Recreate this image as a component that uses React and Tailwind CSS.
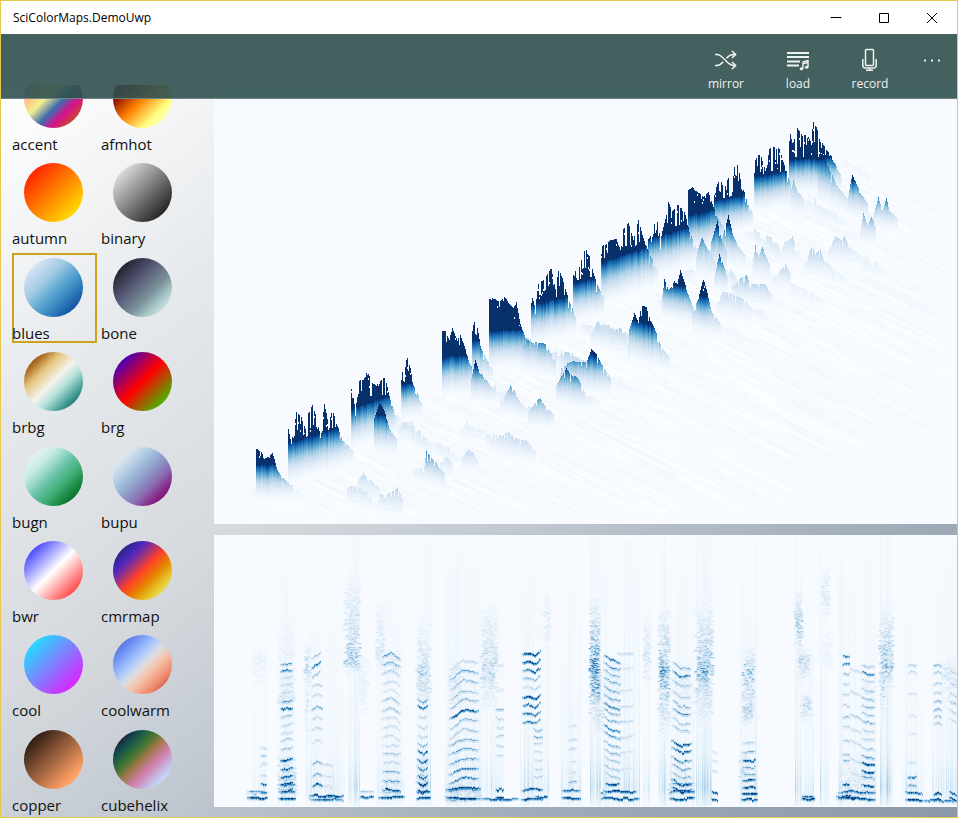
import React from "react";

const BLUES = [
  [247, 251, 255], [222, 235, 247], [198, 219, 239], [158, 202, 225], [107, 174, 214],
  [66, 146, 198], [33, 113, 181], [8, 81, 156], [8, 48, 107],
];
const LEVELS = 28;

function blue(t) {
  const p = Math.max(0, Math.min(0.9999, t)) * 8;
  const i = Math.floor(p);
  const f = p - i;
  const c = BLUES[i].map((v, k) => Math.round(v + (BLUES[i + 1][k] - v) * f));
  return `rgb(${c[0]},${c[1]},${c[2]})`;
}

function random(seed) {
  let s = seed * 7919 + 17;
  return () => {
    s = (s * 1664525 + 1013904223) % 4294967296;
    return s / 4294967296;
  };
}

const newBuckets = () => Array.from({ length: LEVELS + 1 }, () => []);

function put(buckets, t, x, y, w, h) {
  const level = Math.max(0, Math.min(LEVELS, Math.round(t * LEVELS)));
  buckets[level].push(`M${x} ${y}h${w}v${h}h-${w}z`);
}

function Buckets({ buckets, opacity = 1 }) {
  return (
    <g opacity={opacity} shapeRendering="crispEdges">
      {buckets.map((d, i) => (d.length ? <path key={i} d={d.join("")} fill={blue(i / LEVELS)} /> : null))}
    </g>
  );
}

/* Peaks of the surface: x/top pairs, base height at both ends, height where the map saturates, spikiness */
const PEAKS = [
  { p: [[789, 128], [792, 142], [796, 126], [800, 132], [805, 130], [810, 140], [813, 117], [816, 122], [820, 138], [826, 148], [832, 158], [842, 178]], b: [183, 180], dark: 24, s: 0.75 },
  { p: [[818, 168], [822, 154], [826, 162], [830, 170], [836, 184], [852, 204]], b: [192, 208], dark: 36, s: 0.2 },
  { p: [[848, 196], [850, 182], [852, 172], [856, 183], [860, 192], [868, 204]], b: [206, 212], dark: 30, s: 0.3 },
  { p: [[754, 162], [757, 154], [761, 153], [765, 170], [769, 144], [774, 141], [779, 146], [783, 160], [788, 178], [796, 196]], b: [202, 194], dark: 26, s: 0.7 },
  { p: [[790, 192], [793, 178], [797, 190], [804, 200]], b: [205, 208], dark: 40, s: 0.2 },
  { p: [[714, 190], [719, 176], [723, 188], [728, 176], [731, 196], [734, 160], [738, 164], [742, 185], [747, 202], [753, 215]], b: [226, 218], dark: 26, s: 0.85 },
  { p: [[688, 189], [692, 187], [698, 191], [703, 196], [708, 192], [712, 204], [717, 216], [724, 228]], b: [245, 236], dark: 30, s: 0.25 },
  { p: [[722, 236], [726, 222], [728, 214], [732, 232], [738, 246], [746, 256]], b: [254, 260], dark: 32, s: 0.2 },
  { p: [[710, 244], [717, 220], [721, 238], [727, 254]], b: [262, 264], dark: 36, s: 0.2 },
  { p: [[648, 225], [651, 240], [656, 212], [660, 240], [664, 222], [668, 199], [672, 209], [676, 205], [681, 203], [685, 215], [690, 234], [698, 252]], b: [268, 254], dark: 30, s: 0.8 },
  { p: [[696, 254], [702, 235], [706, 246], [716, 264]], b: [268, 272], dark: 40, s: 0.3 },
  { p: [[601, 246], [605, 242], [610, 237], [616, 236], [620, 250], [621, 228], [628, 221], [633, 240], [638, 216], [642, 234], [647, 248], [658, 272]], b: [296, 276], dark: 34, s: 0.6 },
  { p: [[573, 254], [576, 278], [581, 258], [585, 246], [589, 252], [594, 276], [604, 300]], b: [312, 306], dark: 30, s: 0.75 },
  { p: [[531, 294], [535, 307], [538, 279], [545, 276], [551, 264], [555, 287], [558, 265], [562, 277], [566, 292], [576, 318]], b: [334, 324], dark: 30, s: 0.65 },
  { p: [[489, 297], [495, 299], [500, 301], [504, 296], [509, 303], [513, 307], [516, 302], [520, 324], [525, 338], [534, 352]], b: [358, 356], dark: 28, s: 0.2 },
  { p: [[472, 326], [474, 320], [477, 328], [480, 344], [485, 357], [493, 370]], b: [372, 374], dark: 32, s: 0.6 },
  { p: [[442, 330], [445, 329], [449, 338], [452, 328], [457, 340], [460, 333], [464, 346], [469, 362], [477, 376]], b: [386, 384], dark: 30, s: 0.35 },
  { p: [[471, 378], [475, 358], [479, 371], [486, 380], [495, 391]], b: [391, 394], dark: 28, s: 0.2 },
  { p: [[401, 361], [403, 380], [406, 353], [410, 366], [413, 384], [422, 404]], b: [409, 407], dark: 26, s: 0.8 },
  { p: [[351, 384], [355, 410], [359, 380], [363, 378], [368, 370], [372, 382], [376, 386], [381, 376], [385, 378], [389, 396], [397, 420]], b: [440, 424], dark: 32, s: 0.65 },
  { p: [[374, 418], [379, 402], [384, 410], [389, 428], [397, 440]], b: [444, 446], dark: 30, s: 0.2 },
  { p: [[288, 428], [291, 444], [296, 409], [301, 414], [305, 428], [308, 408], [312, 400], [316, 416], [320, 436], [324, 402], [328, 424], [332, 408], [336, 423], [342, 438], [354, 452]], b: [474, 454], dark: 32, s: 0.75 },
  { p: [[256, 448], [260, 450], [264, 458], [268, 456], [272, 452], [276, 466], [281, 476], [293, 486]], b: [490, 489], dark: 26, s: 0.35 },
  { p: [[873, 214], [878, 197], [882, 210], [886, 197], [889, 210], [898, 219]], b: [219, 221], dark: 28, s: 0.2 },
  { p: [[860, 230], [863, 212], [867, 224], [871, 216], [876, 228]], b: [233, 234], dark: 30, s: 0.2 },
  { p: [[828, 248], [833, 240], [835, 234], [840, 238], [845, 236], [850, 248], [862, 257]], b: [256, 258], dark: 48, s: 0.4 },
  { p: [[780, 250], [784, 242], [792, 236], [796, 248], [800, 254]], b: [256, 258], dark: 50, s: 0.4 },
  { p: [[752, 264], [755, 244], [758, 256], [762, 247], [770, 266]], b: [269, 274], dark: 38, s: 0.3 },
  { p: [[804, 266], [812, 245], [815, 254], [820, 249], [824, 261], [832, 266]], b: [268, 270], dark: 40, s: 0.3 },
  { p: [[714, 278], [719, 252], [723, 263], [728, 280]], b: [282, 284], dark: 30, s: 0.2 },
  { p: [[732, 286], [740, 278], [746, 275], [750, 284], [764, 283], [772, 295]], b: [293, 298], dark: 34, s: 0.4 },
  { p: [[774, 278], [785, 263], [791, 275]], b: [281, 283], dark: 42, s: 0.4 },
  { p: [[716, 304], [723, 291], [731, 293], [742, 298], [752, 308]], b: [308, 314], dark: 44, s: 0.5 },
  { p: [[662, 294], [664, 279], [668, 290], [674, 281], [677, 284], [680, 268], [684, 281], [689, 298], [695, 312]], b: [308, 316], dark: 27, s: 0.4 },
  { p: [[692, 312], [698, 298], [703, 276], [707, 293], [711, 310], [721, 325]], b: [322, 328], dark: 30, s: 0.4 },
  { p: [[590, 334], [597, 323], [606, 330], [620, 328], [628, 338]], b: [338, 346], dark: 36, s: 0.5 },
  { p: [[629, 328], [634, 313], [638, 322], [641, 305], [646, 305], [650, 320], [655, 330], [661, 346], [670, 358]], b: [350, 362], dark: 32, s: 0.5 },
  { p: [[520, 348], [526, 338], [532, 341], [545, 343], [556, 362]], b: [360, 370], dark: 32, s: 0.5 },
  { p: [[560, 368], [572, 360], [586, 362], [591, 348], [596, 353], [602, 364], [611, 380]], b: [380, 386], dark: 30, s: 0.35 },
  { p: [[556, 384], [562, 374], [566, 366], [570, 373], [578, 378], [585, 394]], b: [394, 400], dark: 29, s: 0.4 },
  { p: [[500, 402], [505, 394], [510, 384], [516, 395], [524, 406]], b: [405, 410], dark: 34, s: 0.35 },
  { p: [[528, 412], [534, 403], [540, 396], [544, 404], [554, 415]], b: [417, 420], dark: 30, s: 0.4 },
  { p: [[461, 430], [466, 422], [474, 428], [486, 430]], b: [432, 436], dark: 50, s: 0.4 },
  { p: [[490, 440], [500, 437], [508, 430], [514, 438], [526, 440], [536, 452]], b: [443, 456], dark: 38, s: 0.45 },
  { p: [[398, 428], [405, 420], [412, 430]], b: [432, 434], dark: 36, s: 0.4 },
  { p: [[424, 466], [426, 450], [431, 457], [436, 463], [445, 474]], b: [474, 480], dark: 31, s: 0.3 },
  { p: [[440, 463], [446, 456], [453, 464]], b: [466, 468], dark: 36, s: 0.3 },
  { p: [[461, 460], [467, 448], [473, 453], [478, 461]], b: [462, 464], dark: 38, s: 0.3 },
  { p: [[357, 480], [363, 473], [371, 480], [380, 489]], b: [486, 492], dark: 38, s: 0.4 },
  { p: [[347, 488], [354, 485], [366, 491], [372, 499]], b: [495, 501], dark: 38, s: 0.5 },
  { p: [[378, 500], [386, 494], [397, 488], [403, 500]], b: [504, 508], dark: 42, s: 0.4 },
];

function interpolate(points, x) {
  for (let i = 1; i < points.length; i++) {
    if (x <= points[i][0]) {
      const [x0, y0] = points[i - 1];
      const [x1, y1] = points[i];
      return y0 + ((y1 - y0) * (x - x0)) / (x1 - x0);
    }
  }
  return points[points.length - 1][1];
}

const FADE = 12;

function peakBuckets(peak, seed) {
  const rnd = random(seed + 3);
  const out = newBuckets();
  const x0 = peak.p[0][0];
  const x1 = peak.p[peak.p.length - 1][0];
  const tops = peak.p.map((q) => q[1]);
  const tallest = peak.b[0] - Math.min(...tops) > peak.dark * 1.35;
  let run = 0;
  let gap = false;
  let depth = 0;
  let shade = 0;
  for (let x = x0; x < x1; x++) {
    if (run <= 0) {
      gap = !gap && rnd() < peak.s * 1.05;
      run = gap ? 1 + (rnd() < peak.s * 0.5 ? 1 : 0) : 1 + Math.floor(rnd() * 2 + (1 - peak.s) * 2);
      depth = gap ? 0.35 + rnd() * 0.65 : rnd() * 0.22;
      shade = (rnd() - 0.5) * 0.14;
    }
    run -= 1;
    const base = peak.b[0] + ((peak.b[1] - peak.b[0]) * (x - x0)) / (x1 - x0) + rnd() * 2;
    const darkY = base - peak.dark;
    let top = interpolate(peak.p, x);
    if (tallest && top < darkY) top += (darkY - top) * depth * Math.min(1, peak.s * 1.4);
    else top += (base - top) * depth * 0.4;
    top = Math.round(top);
    const notch = rnd() < peak.s * 0.4 ? top + 2 + Math.floor(rnd() * 12) : -1;
    for (let y = top; y < base + FADE; y++) {
      const h = (base + FADE - y) / (peak.dark + FADE);
      if (h > 1.1 && (y === notch || y === notch + 1)) continue;
      const t = h >= 1 ? 1 : Math.pow(h, 2.1) * 0.95 + shade * h * h;
      put(out, t, x, y, 1, 1);
    }
  }
  return out;
}

/* Low ridges: start, end, amplitude, strength */
const BANDS = [
  [735, 224, 800, 270, 9, 0.2], [836, 158, 880, 185, 5, 0.06], [836, 205, 880, 228, 8, 0.16], [795, 200, 850, 225, 9, 0.18],
  [838, 252, 890, 276, 8, 0.14], [765, 275, 800, 292, 8, 0.2], [700, 255, 740, 285, 11, 0.36], [660, 265, 700, 275, 10, 0.3],
  [730, 300, 770, 318, 9, 0.2], [655, 300, 700, 322, 8, 0.3], [575, 325, 640, 345, 10, 0.34], [545, 355, 600, 375, 10, 0.38],
  [510, 343, 550, 362, 10, 0.42], [558, 390, 600, 402, 10, 0.34], [600, 375, 640, 395, 6, 0.08], [505, 405, 550, 418, 6, 0.2],
  [390, 425, 440, 452, 8, 0.2], [430, 445, 465, 462, 6, 0.14], [410, 470, 450, 488, 7, 0.22], [455, 428, 540, 455, 5, 0.2],
  [345, 490, 400, 510, 8, 0.24], [275, 482, 310, 500, 4, 0.08], [480, 388, 520, 405, 7, 0.18], [385, 412, 425, 440, 7, 0.16],
  [605, 345, 650, 362, 10, 0.36], [780, 285, 830, 305, 5, 0.08], [800, 265, 850, 280, 6, 0.14], [248, 490, 280, 493, 3, 0.12],
];

function bandBuckets() {
  const rnd = random(91);
  const out = newBuckets();
  for (const [x0, y0, x1, y1, amp, strength] of BANDS) {
    let k = 0.5;
    for (let x = x0; x < x1; x++) {
      if (rnd() < 0.5) k = rnd();
      const edge = Math.sin((Math.PI * (x - x0)) / (x1 - x0));
      const h = Math.round(amp * (0.4 + k) * edge);
      const base = Math.round(y0 + ((y1 - y0) * (x - x0)) / (x1 - x0));
      for (let j = 0; j < h + 8; j++) {
        put(out, strength * (0.3 + 0.7 * k) * edge * (1 - j / (h + 8)), x, base - h + j, 1, 1);
      }
    }
  }
  return out;
}

function slopeLines(seed, count) {
  const rnd = random(seed);
  const out = [];
  for (let i = 0; i < count; i++) {
    const u = rnd();
    const x = 250 + u * 590;
    const v = Math.pow(rnd(), 1.6) * 230;
    const y = 494 - u * 336 + v * 0.55;
    const len = 20 + rnd() * 60;
    const px = x + v;
    if (px + len > 950 || y + len * 0.5 > 516) continue;
    out.push(`M${px.toFixed(1)} ${y.toFixed(1)}l${len.toFixed(1)} ${(len * 0.5).toFixed(1)}`);
  }
  return out.join("");
}

const SORTED = PEAKS.map((p, i) => ({ i, p, base: Math.max(p.b[0], p.b[1]) })).sort((a, b) => a.base - b.base);
const PEAK_LAYERS = SORTED.map(({ p, i }) => peakBuckets(p, i));
const BAND_LAYER = bandBuckets();
const BLUE_SLOPES = slopeLines(5, 600);
const WHITE_SLOPES = slopeLines(12, 420);

function SurfacePlot() {
  return (
    <svg className="block h-full w-full" viewBox="214 85 743 439" preserveAspectRatio="none" role="img" aria-label="Surface plot">
      <path d={WHITE_SLOPES} stroke="#ffffff" strokeWidth="3" opacity="0.45" fill="none" />
      <path d={BLUE_SLOPES} stroke="#9ecae1" strokeWidth="2" opacity="0.05" fill="none" />
      <Buckets buckets={BAND_LAYER} />
      {PEAK_LAYERS.map((b, i) => <Buckets key={i} buckets={b} />)}
    </svg>
  );
}

/* Harmonic tracks: x range, bend offsets along the track, [y, intensity] list */
const VOICES = [
  { x: [247, 268], bend: [0, 0, 0], ys: [[797, 1], [791, 0.6]] },
  { x: [260, 267], bend: [0, 0, 0], ys: [[747, 0.3], [755, 0.4], [764, 0.3], [775, 0.3], [784, 0.8], [792, 0.9]] },
  { x: [280, 293], bend: [1, 0, -1], ys: [[663, 0.6], [670, 0.7], [677, 0.3], [684, 0.3], [692, 0.3], [701, 0.6], [708, 0.9], [716, 0.4], [724, 0.3], [732, 0.3], [739, 0.4], [748, 0.4], [759, 1], [768, 0.8], [776, 0.9], [783, 1], [790, 1]] },
  { x: [278, 296], bend: [0, 0, 0], ys: [[784, 0.7], [791, 0.7], [798, 1]] },
  { x: [311, 321], bend: [3, 0, -3], ys: [[655, 0.4], [664, 0.8], [674, 0.4]] },
  { x: [311, 323], bend: [2, -1, 1], ys: [[684, 0.3], [694, 0.25], [707, 0.6], [717, 0.3], [728, 0.3], [741, 0.25], [762, 0.5], [774, 0.5], [784, 0.9]] },
  { x: [309, 344], bend: [0, 0, 1], ys: [[795, 1], [798, 0.8]] },
  { x: [322, 334], bend: [0, 0, 2], ys: [[764, 0.3], [775, 0.25], [786, 0.25]] },
  { x: [359, 374], bend: [0, 0, 0], ys: [[791, 0.35], [797, 0.9]] },
  { x: [381, 401], bend: [1, -2, 4], ys: [[655, 0.6], [663, 0.5], [672, 0.35], [682, 0.25], [691, 0.2], [700, 0.4], [709, 0.4], [718, 0.25], [727, 0.25], [736, 0.25]] },
  { x: [382, 401], bend: [0, 0, 1], ys: [[745, 0.25], [753, 0.4], [762, 0.3], [771, 0.5], [780, 0.6], [789, 1], [792, 0.4]] },
  { x: [378, 405], bend: [0, 0, 0], ys: [[797, 1]] },
  { x: [417, 428], bend: [-1, 2, -1], ys: [[665, 0.4], [672, 0.5], [680, 0.3], [689, 0.3], [700, 0.6], [706, 0.8], [716, 0.3], [726, 0.3], [736, 0.35], [744, 0.5], [751, 0.9], [760, 0.9], [768, 0.7], [776, 0.8], [783, 1], [790, 1]] },
  { x: [416, 431], bend: [0, 0, 0], ys: [[791, 0.8], [798, 1]] },
  { x: [449, 479], bend: [9, 0, 2], ys: [[660, 0.3], [670, 0.55], [680, 0.45], [690, 0.4], [699, 0.5], [709, 0.95], [719, 0.45], [729, 0.4]] },
  { x: [448, 479], bend: [6, 0, 1], ys: [[739, 0.5], [748, 0.55], [758, 0.6], [768, 0.7], [777, 0.7]] },
  { x: [445, 481], bend: [2, 0, 1], ys: [[787, 1], [789, 0.6]] },
  { x: [445, 480], bend: [0, 0, 0], ys: [[797, 1], [799, 0.5]] },
  { x: [480, 519], bend: [0, 1, 1], ys: [[798, 0.85]] },
  { x: [495, 504], bend: [0, 0, 0], ys: [[665, 0.2], [690, 0.2], [709, 0.5], [718, 0.3], [727, 0.25], [736, 0.35], [745, 0.3], [755, 0.25], [789, 0.9], [797, 1]] },
  { x: [522, 541], bend: [1, 0, 2, -2], ys: [[652, 0.95], [661, 1], [669, 0.8], [677, 0.5], [686, 0.3], [696, 1], [704, 0.8], [712, 0.8], [721, 0.7]] },
  { x: [533, 543], bend: [0, 1, 0], ys: [[729, 0.5], [736, 0.5], [743, 0.3], [751, 0.25], [760, 0.25], [768, 0.3], [776, 0.35]] },
  { x: [521, 543], bend: [1, -1, 0], ys: [[789, 0.9], [798, 1]] },
  { x: [535, 548], bend: [0, 1, 0], ys: [[796, 0.9]] },
  { x: [568, 577], bend: [1, 0, 0], ys: [[725, 0.2], [739, 0.3], [748, 0.3], [760, 0.2], [772, 0.25], [781, 0.5]] },
  { x: [561, 581], bend: [0, 0, 1], ys: [[790, 0.8], [797, 1]] },
  { x: [603, 621], bend: [-5, 0, 2], ys: [[660, 0.7], [667, 0.6], [674, 0.5], [682, 0.5], [690, 0.5], [699, 0.6], [707, 0.7], [713, 0.5], [721, 0.5], [729, 0.7], [736, 0.6], [745, 0.5], [753, 0.45], [760, 0.4], [769, 0.4], [776, 0.4]] },
  { x: [617, 634], bend: [0, 0, -1], ys: [[653, 0.3], [668, 0.2], [690, 0.2], [706, 0.25], [721, 0.3], [736, 0.25], [752, 0.2], [769, 0.2]] },
  { x: [605, 620], bend: [0, 0, 0], ys: [[783, 1]] },
  { x: [603, 637], bend: [-1, 0, 0], ys: [[791, 1]] },
  { x: [600, 640], bend: [0, 0, 0], ys: [[798, 1]] },
  { x: [672, 691], bend: [-6, 0, 0], ys: [[668, 0.5], [676, 0.7], [686, 0.45], [697, 0.4], [706, 0.5], [714, 0.6], [723, 0.4], [731, 0.4]] },
  { x: [671, 692], bend: [-4, 1, 0], ys: [[744, 0.9], [751, 0.8], [760, 0.65], [768, 0.55], [776, 0.5], [783, 0.9], [790, 1]] },
  { x: [669, 695], bend: [0, 0, 0], ys: [[784, 0.6], [791, 0.9], [798, 1]] },
  { x: [711, 718], bend: [-1, 0, 1], ys: [[751, 0.2], [760, 0.2], [770, 0.2], [792, 0.9], [799, 1]] },
  { x: [742, 756], bend: [0, 0, 0], ys: [[742, 0.3], [752, 0.5], [760, 0.9], [767, 0.6], [774, 0.5], [780, 0.9], [787, 1]] },
  { x: [741, 758], bend: [0, 0, 0], ys: [[793, 1], [799, 1]] },
  { x: [801, 815], bend: [0, 0, 0], ys: [[796, 0.8], [798, 1]] },
  { x: [842, 850], bend: [0, 0, 0], ys: [[656, 0.7], [664, 0.7], [673, 0.4], [683, 0.3], [694, 0.3], [705, 0.3], [717, 0.4], [727, 0.3], [740, 0.35], [753, 0.4], [760, 0.5], [784, 0.9]] },
  { x: [849, 862], bend: [-2, 0, 3], ys: [[670, 0.25], [692, 0.25], [716, 0.4], [730, 0.25], [742, 0.25], [760, 0.3], [774, 0.25]] },
  { x: [861, 875], bend: [-1, 1, 1], ys: [[665, 0.4], [672, 0.7], [680, 0.3], [689, 0.35], [698, 0.4], [706, 0.5], [713, 0.4], [721, 0.5], [730, 0.3], [739, 0.3], [748, 0.4], [756, 0.6], [763, 1], [771, 0.95], [777, 0.6], [785, 0.95]] },
  { x: [838, 876], bend: [0, 0, 1], ys: [[791, 0.85], [798, 1]] },
  { x: [836, 857], bend: [0, 0, 0], ys: [[796, 0.9]] },
  { x: [907, 917], bend: [1, 0, 1], ys: [[664, 0.35], [671, 0.25], [693, 0.2], [715, 0.2], [733, 0.2], [761, 0.25], [776, 0.7], [784, 0.6]] },
  { x: [905, 923], bend: [0, 0, 1], ys: [[792, 0.9], [799, 1]] },
  { x: [922, 957], bend: [0, 0, 0], ys: [[800, 0.7]] },
  { x: [933, 942], bend: [1, -1, 1], ys: [[665, 0.5], [672, 0.4], [683, 0.4], [692, 0.35], [701, 0.5], [709, 0.5], [716, 0.4], [723, 0.4], [793, 1], [799, 1]] },
  { x: [949, 957], bend: [-2, 0, 2], ys: [[672, 0.3], [684, 0.3], [695, 0.35], [703, 0.4], [711, 0.35], [720, 0.25], [793, 0.9], [799, 1]] },
];

/* Noise patches: x range, y range, y of the strongest row, strength */
const NOISE = [
  [344, 360, 565, 676, 660, 0.55], [356, 368, 640, 730, 680, 0.14], [304, 310, 640, 690, 665, 0.5], [304, 308, 660, 770, 700, 0.22],
  [376, 384, 590, 680, 650, 0.28], [416, 430, 610, 712, 680, 0.4], [448, 462, 655, 740, 670, 0.32], [480, 497, 595, 715, 670, 0.45],
  [543, 550, 590, 670, 615, 0.22], [589, 599, 590, 735, 666, 0.95], [590, 599, 650, 690, 668, 1], [592, 600, 660, 708, 690, 0.9],
  [594, 603, 690, 740, 715, 0.35], [643, 650, 610, 690, 660, 0.35], [658, 669, 600, 745, 670, 0.7], [659, 668, 650, 687, 671, 1],
  [695, 713, 590, 735, 668, 0.6], [697, 709, 652, 694, 670, 0.95], [742, 754, 645, 725, 668, 0.65], [743, 753, 688, 726, 710, 0.65],
  [739, 748, 745, 790, 770, 0.45], [794, 802, 585, 660, 625, 0.55], [796, 810, 646, 684, 660, 0.45], [800, 811, 688, 725, 705, 0.45],
  [821, 829, 560, 625, 593, 0.25], [822, 832, 620, 680, 650, 0.12], [879, 893, 600, 692, 667, 0.65], [880, 884, 650, 730, 684, 0.45],
  [941, 957, 655, 720, 670, 0.3], [252, 266, 640, 700, 660, 0.12], [278, 294, 600, 665, 655, 0.14], [278, 294, 655, 720, 700, 0.3],
  [384, 400, 645, 690, 660, 0.25], [246, 260, 790, 801, 796, 0.9], [322, 343, 793, 800, 797, 0.8], [836, 850, 790, 801, 797, 0.7],
  [278, 296, 745, 802, 785, 0.55], [416, 428, 740, 800, 785, 0.6], [800, 814, 793, 801, 797, 0.8], [445, 480, 765, 801, 797, 0.4],
  [600, 606, 788, 800, 792, 0.7], [668, 674, 785, 800, 792, 0.7], [838, 876, 740, 802, 795, 0.3], [380, 402, 765, 802, 795, 0.35],
  [860, 876, 660, 720, 690, 0.14], [603, 622, 650, 740, 680, 0.16], [671, 692, 655, 740, 680, 0.18],
];

/* Faint vertical streaks: x range, start y, opacity */
const STREAKS = [
  [252, 268, 540, 0.35], [278, 296, 536, 0.7], [305, 345, 540, 0.45], [348, 360, 536, 0.7], [376, 405, 540, 0.6], [416, 431, 536, 0.7],
  [445, 480, 540, 0.7], [480, 504, 540, 0.5], [520, 550, 540, 0.6], [560, 582, 560, 0.5], [590, 602, 536, 0.9], [603, 640, 540, 0.6],
  [643, 650, 560, 0.4], [658, 668, 536, 0.8], [669, 695, 540, 0.6], [696, 712, 536, 0.9], [738, 758, 540, 0.6], [795, 802, 536, 0.9],
  [801, 814, 600, 0.4], [820, 829, 536, 0.7], [838, 876, 540, 0.6], [880, 893, 536, 1], [902, 924, 560, 0.5], [932, 957, 540, 0.6],
];

function bendAt(bend, t) {
  const p = t * (bend.length - 1);
  const i = Math.min(bend.length - 2, Math.floor(p));
  const f = (1 - Math.cos(Math.PI * (p - i))) / 2;
  return bend[i] + (bend[i + 1] - bend[i]) * f;
}

function spectrogram() {
  const rnd = random(41);
  const core = newBuckets();
  const halo = newBuckets();
  const noise = newBuckets();
  for (const { x, bend, ys } of VOICES) {
    for (const [y, strength] of ys) {
      let wobble = 0;
      for (let px = x[0]; px < x[1]; px++) {
        const t = (px - x[0]) / (x[1] - x[0]);
        if (rnd() < 0.22) wobble = Math.round((rnd() - 0.5) * 2.2);
        const edge = Math.min(1, 0.45 + 3 * Math.min(t, 1 - t));
        const k = strength * edge * (0.7 + rnd() * 0.45);
        const py = Math.round(y + bendAt(bend, t) + wobble * 0.6);
        put(halo, k * 0.42, px, py - 1, 1, 4);
        put(core, k, px, py, 1, 1);
        put(core, k * (strength > 0.6 ? 0.75 : 0.5), px, py + 1, 1, 1);
      }
    }
  }
  for (const [x0, x1, y0, y1, peak, strength] of NOISE) {
    for (let y = y0; y < y1; y++) {
      const fall = y < peak ? (y - y0) / Math.max(1, peak - y0) : (y1 - y) / Math.max(1, y1 - peak);
      for (let x = x0; x < x1; x += 1) {
        const side = 1 - Math.pow(Math.abs((x - (x0 + x1) / 2) / ((x1 - x0) / 2)), 3);
        if (rnd() < 0.42 * Math.max(0.3, side)) {
          const k = strength * Math.pow(fall, 1.1) * (0.15 + 0.85 * Math.pow(rnd(), 1.3));
          if (k > 0.03) {
            put(noise, k * 0.45, x - 1, y, 4, 2);
            put(noise, k, x, y, 2, 1);
          }
        }
      }
    }
  }
  return { core, halo, noise };
}

const SPECTRUM = spectrogram();

const STREAK_LINES = (() => {
  const rnd = random(23);
  const lines = [];
  for (const [x0, x1, y, o] of STREAKS) {
    for (let x = x0; x < x1; x++) lines.push({ x, y, o: o * (0.12 + 0.88 * rnd() * rnd()) });
  }
  return lines;
})();

function SpectrogramPlot() {
  return (
    <svg className="block h-full w-full" viewBox="214 535 743 272" preserveAspectRatio="none" role="img" aria-label="Spectrogram">
      <defs>
        <linearGradient id="streak" x1="0" y1="0" x2="0" y2="1">
          <stop offset="0" stopColor="#9ecae1" stopOpacity="0.12" />
          <stop offset="0.45" stopColor="#9ecae1" stopOpacity="0.24" />
          <stop offset="0.8" stopColor="#9ecae1" stopOpacity="0.4" />
          <stop offset="0.93" stopColor="#6baed6" stopOpacity="0.8" />
          <stop offset="1" stopColor="#9ecae1" stopOpacity="0.4" />
        </linearGradient>
      </defs>
      {STREAK_LINES.map((s, i) => (
        <rect key={i} x={s.x} y={s.y} width="1" height={806 - s.y} fill="url(#streak)" opacity={s.o} />
      ))}
      <Buckets buckets={SPECTRUM.noise} opacity={0.8} />
      <Buckets buckets={SPECTRUM.halo} opacity={0.8} />
      <Buckets buckets={SPECTRUM.core} opacity={0.95} />
    </svg>
  );
}

const MAPS = [
  ["accent", "bg-[linear-gradient(135deg,#7fc97f_0%,#beaed4_14%,#fdc086_29%,#f2f090_43%,#3f6cb0_59%,#d8118a_72%,#c8501f_88%,#666666_100%)]"],
  ["afmhot", "bg-[linear-gradient(135deg,#000000_0%,#800000_25%,#ff8000_50%,#ffff80_75%,#ffffff_100%)]"],
  ["autumn", "bg-[linear-gradient(135deg,#ff0000_0%,#ffff00_100%)]"],
  ["binary", "bg-[linear-gradient(135deg,#ffffff_0%,#000000_100%)]"],
  ["blues", "bg-[linear-gradient(135deg,#f7fbff_0%,#c8daf0_22%,#9ecae1_38%,#6baed6_50%,#4292c6_63%,#1c62ae_80%,#08306b_100%)]"],
  ["bone", "bg-[linear-gradient(135deg,#000000_0%,#23222f_15%,#545474_38%,#7b9099_62%,#a8c8c8_76%,#ffffff_100%)]"],
  ["brbg", "bg-[linear-gradient(135deg,#543005_0%,#ab6b1e_18%,#e3c57f_32%,#f5f3ee_50%,#b5e4dc_62%,#3a978f_80%,#003c30_100%)]"],
  ["brg", "bg-[linear-gradient(135deg,#0000ff_0%,#ff0000_50%,#00ff00_100%)]"],
  ["bugn", "bg-[linear-gradient(135deg,#f7fcfd_0%,#ccece6_27%,#99d8c9_39%,#66c2a4_50%,#41ae76_64%,#14803a_80%,#00441b_100%)]"],
  ["bupu", "bg-[linear-gradient(135deg,#f7fcfd_0%,#d5e3ef_20%,#9ebcda_40%,#8c96c6_53%,#8b6bb1_66%,#871f83_81%,#4d004b_100%)]"],
  ["bwr", "bg-[linear-gradient(135deg,#0000ff_0%,#ffffff_50%,#ff0000_100%)]"],
  ["cmrmap", "bg-[linear-gradient(135deg,#000000_0%,#26267f_14%,#4d26bf_27%,#993380_38%,#ff4026_50%,#e68000_63%,#e6c020_76%,#e6e680_88%,#ffffff_100%)]"],
  ["cool", "bg-[linear-gradient(135deg,#00ffff_0%,#ff00ff_100%)]"],
  ["coolwarm", "bg-[linear-gradient(135deg,#3b4cc0_0%,#6688ed_20%,#9abbff_36%,#c9d8ef_47%,#dddcdc_52%,#f5c4ac_62%,#ed8467_80%,#b40426_100%)]"],
  ["copper", "bg-[linear-gradient(135deg,#000000_0%,#ff9f65_81%,#ffc77f_100%)]"],
  ["cubehelix", "bg-[linear-gradient(135deg,#000000_0%,#1a1d3b_13%,#16534c_25%,#3f7632_38%,#a1794a_50%,#d07eab_63%,#c1caf3_80%,#ffffff_100%)]"],
];

const SELECTED = "blues";

function MapItem({ name, fill }) {
  return (
    <li className="pt-[2px]">
      <button
        type="button"
        aria-pressed={name === SELECTED}
        className={`block h-[90px] w-[85px] text-left ${name === SELECTED ? "shadow-[inset_0_0_0_2px_#cda31c]" : ""}`}
      >
        <span className={`ml-3 mt-[5px] block size-[59px] rounded-full ${fill}`} />
        <span className="mt-1 block whitespace-nowrap text-[15px] leading-6 text-[#111111]">{name}</span>
      </button>
    </li>
  );
}

function ShuffleIcon() {
  return (
    <svg className="h-6 w-6" viewBox="0 0 24 24" fill="none" stroke="currentColor" strokeWidth="1.5" aria-hidden="true">
      <path d="M1 6.500h2c6.500 0 9.500 11 16.500 11h2" />
      <path d="M1 17.500h2c2.600 0 4.500-1.700 6.200-3.800M12.500 10.200c2-2.200 4.200-3.700 7-3.700h2" />
      <path d="M18 3l3.600 3.500L18 10M18 14l3.600 3.500L18 21" />
    </svg>
  );
}

function PlaylistIcon() {
  return (
    <svg className="h-6 w-6" viewBox="0 0 24 24" fill="none" stroke="currentColor" aria-hidden="true">
      <path d="M1 5h22M1 9h22M1 13.500h13M1 17.500h12" strokeWidth="1.900" />
      <path d="M17 20.500v-6.500l5-1.500v6.500M17 15.800l5-1.500" strokeWidth="1.400" />
      <ellipse cx="15.500" cy="20.700" rx="1.800" ry="1.500" fill="currentColor" stroke="none" />
      <ellipse cx="20.600" cy="19.200" rx="1.700" ry="1.500" fill="currentColor" stroke="none" />
    </svg>
  );
}

function MicIcon() {
  return (
    <svg className="h-6 w-6" viewBox="0 0 24 24" fill="none" stroke="currentColor" strokeWidth="1.500" aria-hidden="true">
      <rect x="7.500" y="1.500" width="8" height="16" rx="1" />
      <path d="M4.800 11v6c0 1.700.8 3 2.700 3h8c1.900 0 2.700-1.300 2.700-3v-6M11.500 20v2.300M8 22.300h7" />
    </svg>
  );
}

const ACTIONS = [
  ["mirror", ShuffleIcon],
  ["load", PlaylistIcon],
  ["record", MicIcon],
];

function TitleBar() {
  const button = "flex h-full w-12 items-center justify-center";
  return (
    <header className="flex h-[33px] shrink-0 items-center bg-white pl-3 pr-px text-black">
      <h1 className="flex-1 text-[12px] leading-5">SciColorMaps.DemoUwp</h1>
      <button type="button" aria-label="Minimize" className={button}>
        <svg className="h-3 w-3" viewBox="0 0 12 12" stroke="currentColor"><path d="M0.500 5.500h11" /></svg>
      </button>
      <button type="button" aria-label="Maximize" className={button}>
        <svg className="h-3 w-3" viewBox="0 0 12 12" fill="none" stroke="currentColor"><path d="M1.500 1.500h9v9h-9z" /></svg>
      </button>
      <button type="button" aria-label="Close" className={button}>
        <svg className="h-3 w-3" viewBox="0 0 12 12" stroke="currentColor"><path d="M1 1l10 10M11 1L1 11" /></svg>
      </button>
    </header>
  );
}

function CommandBar() {
  return (
    <nav className="relative z-10 -mb-[14px] flex h-[65px] shrink-0 justify-end border-b border-[#6d8584] bg-[linear-gradient(to_bottom,#45615f_51px,#2f5150e6_51px)] text-[#eef2f2]">
      {ACTIONS.map(([label, Icon]) => (
        <button key={label} type="button" className="flex w-[72px] flex-col items-center pt-[14px] text-[12px] leading-6">
          <Icon />
          <span>{label}</span>
        </button>
      ))}
      <button type="button" aria-label="More" className="flex w-[51px] justify-center pt-[14px]">
        <svg className="h-6 w-6" viewBox="0 0 24 24" fill="currentColor" aria-hidden="true">
          <path d="M4 11.500h2v2h-2zM11 11.500h2v2h-2zM18 11.500h2v2h-2z" />
        </svg>
      </button>
    </nav>
  );
}

export default function App() {
  return (
    <div className="flex h-screen flex-col overflow-hidden border border-[#e6c84f] bg-white font-['Open_Sans','Noto_Sans',sans-serif]">
      <TitleBar />
      <CommandBar />
      <main className="flex min-h-0 flex-1 overflow-hidden bg-[linear-gradient(to_bottom_right,#ffffff_0%,#e6e9ec_23%,#d6dade_42%,#c3cad2_56%,#a0acb9_77%,#8b98a7_100%)]">
        <ul className="-mt-[23px] grid w-[213px] shrink-0 grid-cols-[repeat(2,89px)] grid-rows-8 pl-[11px]">
          {MAPS.map(([name, fill]) => <MapItem key={name} name={name} fill={fill} />)}
        </ul>
        <div className="grid min-w-0 flex-1 grid-rows-[439fr_272fr] gap-[11px] pb-[10px]">
          <section className="min-h-0 overflow-hidden bg-[#f7fbff]"><SurfacePlot /></section>
          <section className="min-h-0 overflow-hidden bg-[#f7fbff]"><SpectrogramPlot /></section>
        </div>
      </main>
    </div>
  );
}
